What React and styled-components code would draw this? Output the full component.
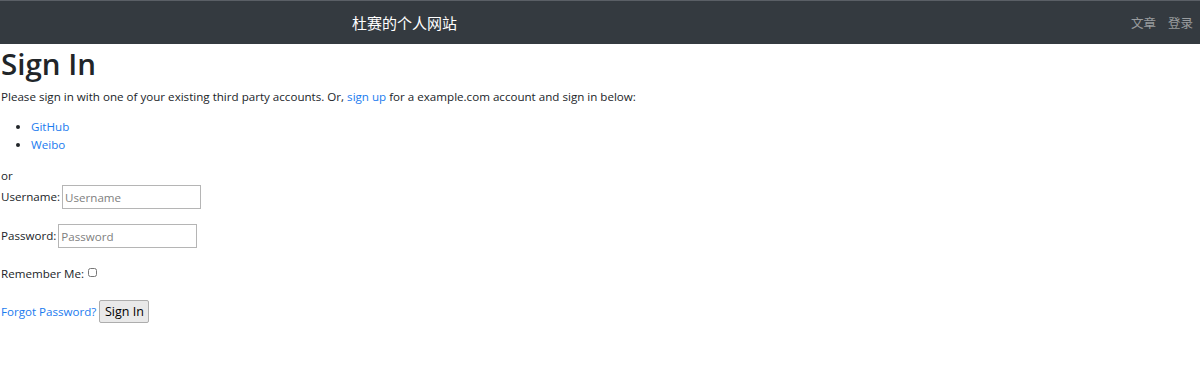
import React from "react";
import styled, { createGlobalStyle } from "styled-components";

const GlobalStyle = createGlobalStyle`
  body {
    margin: 0;
    font-family: "Open Sans", "Noto Sans CJK SC", sans-serif;
    font-size: 11.6px;
    line-height: 18px;
    color: #212529;
    background: #fff;
  }
`;

const Navbar = styled.nav`
  height: 44px;
  background: #343a40;
  border-top: 1px solid #5a5f66;
  box-sizing: border-box;
  display: flex;
  align-items: center;
  padding: 0 7px 0 352px;
`;

const Brand = styled.a`
  color: #fff;
  font-family: "Noto Sans CJK SC", sans-serif;
  font-size: 15px;
  text-decoration: none;
`;

const NavLinks = styled.div`
  margin-left: auto;
  display: flex;
  gap: 12px;
`;

const NavLink = styled.a`
  color: rgba(255, 255, 255, 0.5);
  font-family: "Noto Sans CJK SC", sans-serif;
  font-size: 12.5px;
  text-decoration: none;
`;

const Main = styled.main`
  padding: 0 1px;
`;

const Title = styled.h1`
  font-size: 29.5px;
  font-weight: 600;
  line-height: 38px;
  margin: 1px 0 5px;
`;

const Text = styled.p`
  margin: 0 0 12px;
`;

const Link = styled.a`
  color: #1a7bef;
  text-decoration: none;
`;

const List = styled.ul`
  margin: 0 0 13px;
  padding-left: 30px;
`;

const Row = styled.p`
  margin: 0 0 ${(p) => p.$gap || 15}px;
  display: flex;
  align-items: center;
  gap: 2px;
`;

const Input = styled.input`
  width: 139px;
  height: 24px;
  box-sizing: border-box;
  border: 1px solid #b5b5b5;
  font: inherit;
  padding: 0 2px;
  &::placeholder {
    color: #808080;
  }
`;

const Check = styled.input`
  width: 9px;
  height: 9px;
  margin: 0 0 3px 2px;
`;

const Button = styled.button`
  font: inherit;
  font-size: 12.5px;
  height: 23px;
  width: 50px;
  margin-left: 1px;
  padding: 0;
  border: 1px solid #adadad;
  background: #e9e9e9;
  border-radius: 2px;
  color: #000;
`;

export default function App() {
  return (
    <>
      <GlobalStyle />
      <Navbar>
        <Brand href="#">杜赛的个人网站</Brand>
        <NavLinks>
          <NavLink href="#">文章</NavLink>
          <NavLink href="#">登录</NavLink>
        </NavLinks>
      </Navbar>
      <Main>
        <Title>Sign In</Title>
        <Text>
          Please sign in with one of your existing third party accounts. Or,{" "}
          <Link href="#">sign up</Link> for a example.com account and sign in below:
        </Text>
        <List>
          <li><Link href="#">GitHub</Link></li>
          <li><Link href="#">Weibo</Link></li>
        </List>
        <div>or</div>
        <form>
          <Row>
            Username: <Input type="text" placeholder="Username" />
          </Row>
          <Row $gap={17}>
            Password: <Input type="password" placeholder="Password" />
          </Row>
          <Row $gap={17}>
            Remember Me: <Check type="checkbox" />
          </Row>
          <Row>
            <Link href="#">Forgot Password?</Link>
            <Button type="submit">Sign In</Button>
          </Row>
        </form>
      </Main>
    </>
  );
}
